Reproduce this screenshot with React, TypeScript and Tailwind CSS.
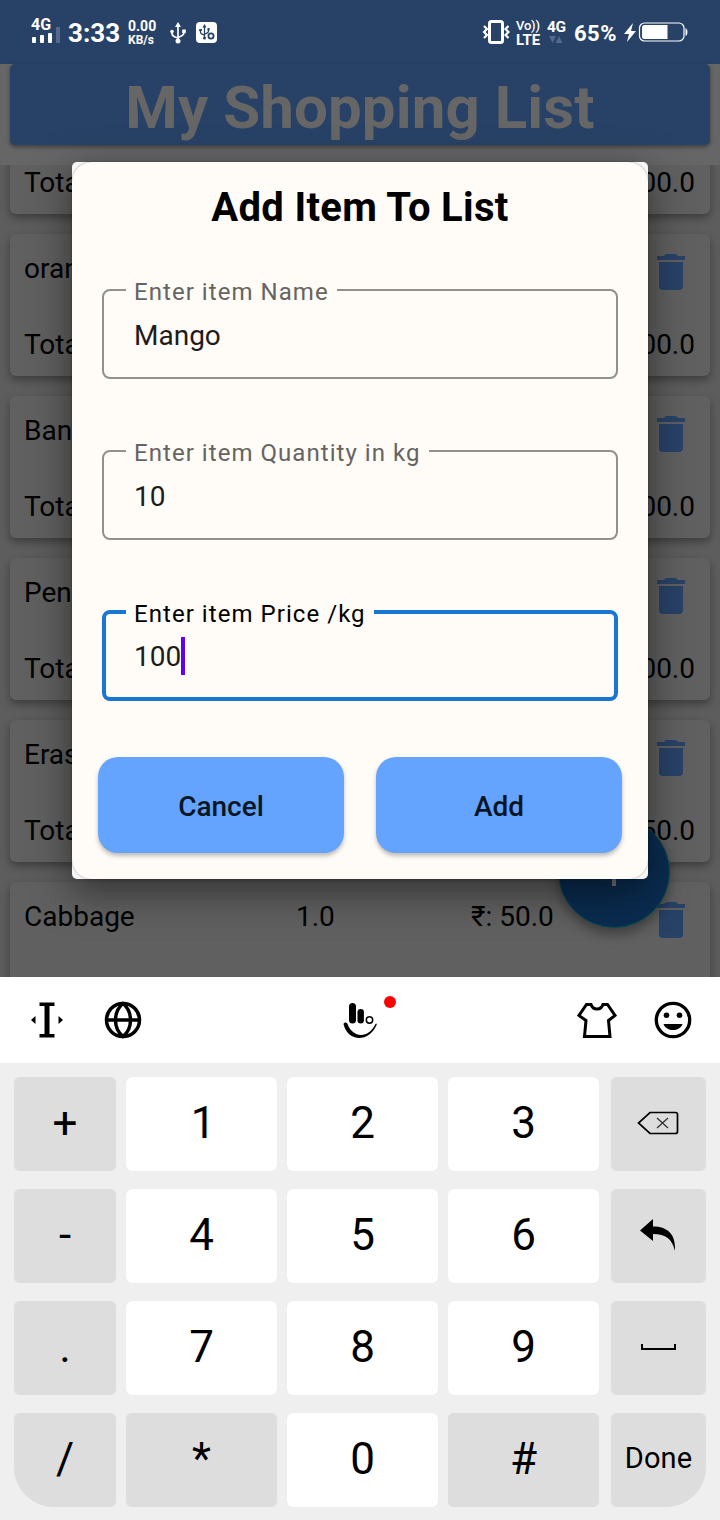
import React from 'react';

const items = [
  { name: 'Apple', qty: '10.0', price: '₹: 50.0', total: '₹: 500.0' },
  { name: 'orange', qty: '10.0', price: '₹: 50.0', total: '₹: 500.0' },
  { name: 'Banana', qty: '10.0', price: '₹: 50.0', total: '₹: 500.0' },
  { name: 'Pen', qty: '10.0', price: '₹: 10.0', total: '₹: 100.0' },
  { name: 'Eraser', qty: '10.0', price: '₹: 5.0', total: '₹: 50.0' },
  { name: 'Cabbage', qty: '1.0', price: '₹: 50.0', total: '₹: 50.0' },
];

function UsbIcon({ className }: { className: string }) {
  return (
    <svg className={className} viewBox="0 0 16 22" fill="none" stroke="currentColor" strokeWidth="1.7">
      <path d="M8 3v16M2 9v2.5q0 3 6 4.500M14 9v1.500q0 3-6 5" />
      <path d="M8 0l3 5H5z" fill="currentColor" stroke="none" />
      <circle cx="8" cy="19" r="2.500" fill="currentColor" stroke="none" />
      <circle cx="2" cy="9.500" r="1.800" fill="currentColor" stroke="none" />
      <path d="M12.200 7.500h3.600v3.500h-3.600z" fill="currentColor" stroke="none" />
    </svg>
  );
}

function StatusBar() {
  return (
    <header className="flex h-16 shrink-0 items-start bg-[#284267] pt-[18px] pl-[31px] font-bold text-white">
      <div className="flex w-[30px] flex-col">
        <span className="h-[14px] text-[16px] leading-[14px] tracking-[0.1px]">4G</span>
        <div className="-mt-[5px] ml-px flex h-[16px] items-end gap-1">
          <i className="h-[6px] w-1 shrink-0 rounded-[1px] bg-white" />
          <i className="h-[8px] w-1 shrink-0 rounded-[1px] bg-white" />
          <i className="h-[10px] w-1 shrink-0 rounded-[1px] bg-white" />
          <i className="h-[16px] w-1 shrink-0 bg-[#53688a]" />
        </div>
      </div>
      <span className="ml-[7px] w-[60px] text-[26px] leading-[31px]">3:33</span>
      <div className="flex w-[42px] flex-col pt-px text-[14px] leading-[15px]">
        <span>0.00</span>
        <span className="text-[12px] leading-[12px]">KB/s</span>
      </div>
      <UsbIcon className="mt-[4px] h-[22px] w-4" />
      <svg className="mt-[4px] ml-[10px] h-[21px] w-[21px]" viewBox="0 0 21 21">
        <rect width="21" height="21" rx="4" fill="#fff" />
        <g fill="none" stroke="#284267" strokeWidth="1.300">
          <path d="M8.500 4v13M4.500 8v2q0 2 4 3M12.500 7v2q0 2-4 3" />
          <circle cx="15" cy="14" r="2.600" strokeWidth="1.800" />
        </g>
        <path d="M8.500 2l2 3.500h-4zM3.200 7h2.600v2H3.200zM11.500 6h2v2.500h-2z" fill="#284267" />
        <circle cx="8.500" cy="16" r="1.500" fill="#284267" />
      </svg>
      <svg className="mt-[1px] ml-[265px] h-[26px] w-[28px]" viewBox="0 0 28 26" fill="none" stroke="#fff">
        <rect x="7.500" y="2.500" width="13" height="21" rx="2" strokeWidth="3" />
        <path d="M2 7l3 3-3 3 3 3-3 3M26.500 7l-3 3 3 3-3 3 3 3" strokeWidth="2.200" />
      </svg>
      <div className="ml-[6px] flex w-[31px] flex-col pt-px leading-[14px]">
        <span className="text-[13px] font-medium tracking-[-0.2px] whitespace-nowrap">Vo))</span>
        <span className="text-[15px] font-bold">LTE</span>
      </div>
      <div className="flex w-[27px] flex-col">
        <span className="h-[18px] text-[15.500px] leading-[19px] tracking-[-0.5px]">4G</span>
        <svg className="ml-px h-[8px] w-[16px]" viewBox="0 0 16 8">
          <path d="M1 0h7L4.500 7zM7.500 7h7L11 0z" fill="#53688a" />
        </svg>
      </div>
      <span className="w-[49px] text-[22px] leading-[32px] tracking-[0.5px]">65%</span>
      <svg className="mt-[3px] h-[22px] w-[66px]" viewBox="0 0 66 22">
        <path d="M10 2L1 13h5l-2 8 9-11H8z" fill="#fff" />
        <rect x="16.500" y="2" width="44.500" height="18" rx="5" fill="none" stroke="#fff" strokeWidth="1.200" />
        <path d="M21.500 4h23v14h-23q-2.500 0-2.500-2.500v-9Q19 4 21.500 4z" fill="#fff" />
        <path d="M62.500 7q2 1 2 4t-2 4z" fill="#fff" />
      </svg>
    </header>
  );
}

function ItemCard({ item }: { item: (typeof items)[number] }) {
  return (
    <article className="h-[142px] shrink-0 rounded-[6px] bg-[#606060] px-[14px] text-[28px] text-black shadow-[0_4px_8px_rgba(0,0,0,0.35)]">
      <div className="grid h-[70px] grid-cols-[272px_175px_1fr_32px] items-center">
        <span>{item.name}</span>
        <span>{item.qty}</span>
        <span>{item.price}</span>
        <svg className="mt-[6px] -ml-[7px] h-9 w-7" viewBox="0 0 28 36" fill="#284267">
          <path d="M0 2h7l2-2h10l2 2h7v4H0zM2 8h24v24q0 4-4 4H6q-4 0-4-4z" />
        </svg>
      </div>
      <div className="flex h-[82px] items-center justify-between">
        <span>Total</span>
        <span className="-mr-px pr-[2px]">{item.total}</span>
      </div>
    </article>
  );
}

function Field({ label, value, focused = false }: { label: string; value: string; focused?: boolean }) {
  return (
    <fieldset
      className={
        focused
          ? 'mb-[60px] h-[101px] rounded-[8px] border-4 border-[#1976d2] pl-[20px]'
          : 'mb-[60px] h-[101px] rounded-[8px] border-2 border-[#92908d] pl-[22px]'
      }
    >
      <legend
        className={
          focused
            ? 'h-6 px-2 text-[24px] leading-[28px] tracking-[1.05px] text-black'
            : 'h-6 px-2 text-[24px] leading-[28px] tracking-[1.05px] text-[#656462]'
        }
      >
        {label}
      </legend>
      <div
        className={
          focused
            ? 'flex items-center pt-[13px] pl-2 text-[28px] leading-[38px] text-[#1d1c1b]'
            : 'flex items-center pt-[16px] pl-2 text-[28px] leading-9 text-[#1d1c1b]'
        }
      >
        <span className={focused ? 'pt-[2px] leading-9' : ''}>{value}</span>
        {focused && <i className="h-[38px] w-1 bg-[#6200ee]" />}
      </div>
    </fieldset>
  );
}

function AddDialog() {
  return (
    <section className="absolute top-[162px] left-[72px] h-[717px] w-[576px] rounded-[5px] bg-[#f6f6f6] shadow-[0_12px_40px_rgba(0,0,0,0.5)]">
      <div className="flex h-full flex-col rounded-[20px] bg-[#fffbf6] px-[30px] shadow-[0_0_2px_rgba(0,0,0,0.4)]">
        <h2 className="h-[116px] pt-[22px] text-center text-[40px] leading-[47px] font-bold tracking-[0.3px] text-black">Add Item To List</h2>
        <Field label="Enter item Name" value="Mango" />
        <Field label="Enter item Quantity in kg" value="10" />
        <Field label="Enter item Price /kg" value="100" focused />
        <div className="-mx-1 -mt-[4px] grid grid-cols-2 gap-8 text-[28px] font-medium text-[#0b1624]">
          <button className="h-24 rounded-[20px] bg-[#64a4ff] pt-[3px] shadow-[0_3px_4px_rgba(0,0,0,0.25)]">Cancel</button>
          <button className="h-24 rounded-[20px] bg-[#64a4ff] pt-[3px] shadow-[0_3px_4px_rgba(0,0,0,0.25)]">Add</button>
        </div>
      </div>
    </section>
  );
}

function KeyboardToolbar() {
  return (
    <div className="flex h-[86px] items-center bg-white text-black">
      <svg className="ml-[30px] h-10 w-[34px]" viewBox="0 0 34 40">
        <path d="M9.500 2.500h15V6h-5v28h5v3.500h-15V34h5V6h-5zM5.500 16v8L1 20zM28.500 16v8l4.500-4z" />
      </svg>
      <svg className="ml-[40px] h-[38px] w-[38px]" viewBox="0 0 38 38" fill="none" stroke="#000" strokeWidth="3.500">
        <circle cx="19" cy="19" r="16.500" />
        <path d="M2 19h34M19 2.500c-10 8-10 25 0 33c10-8 10-25 0-33z" />
      </svg>
      <div className="relative ml-[200px] h-10 w-[56px]">
        <svg className="h-10 w-9" viewBox="0 0 36 40">
          <rect x="7" y="3" width="7" height="20.500" rx="3.500" />
          <rect x="15.500" y="9" width="6.400" height="14.500" rx="3.200" />
          <circle cx="27.500" cy="20" r="3.200" fill="none" stroke="#000" strokeWidth="1.500" />
          <path d="M1.500 24c1-2 3-2 4 0c5 14 21 15 28 0c.6-1.200 1.600-.2 1.100 1c-8 18-29 17-33.100-1z" />
        </svg>
        <i className="absolute -top-[4px] left-[42px] size-3 rounded-full bg-[#fe0000]" />
      </div>
      <svg className="ml-[178px] h-[38px] w-[42px]" viewBox="0 0 42 38" fill="none" stroke="#000" strokeWidth="3">
        <path d="M10.500 3.500H15c2 6 10 6 12 0h4.500l7.500 11-6.500 5L34 35.500H8.500L10 19.500l-7-5z" />
      </svg>
      <svg className="ml-[36px] h-[38px] w-[38px]" viewBox="0 0 38 38">
        <circle cx="19" cy="19" r="16.700" fill="none" stroke="#000" strokeWidth="3.300" />
        <circle cx="12.500" cy="14.300" r="2.800" />
        <circle cx="25.500" cy="14.300" r="2.800" />
        <path d="M9.500 23h19c-3 8-16 8-19 0z" />
      </svg>
    </div>
  );
}

function BackspaceIcon() {
  return (
    <svg className="mr-px h-6 w-[42px]" viewBox="0 0 42 24" fill="none" stroke="#000">
      <path d="M13 1.500h25.500q2 0 2 2v17q0 2-2 2H13L1.500 12z" strokeWidth="1.700" />
      <path d="M20 7l11 10M31 7L20 17" strokeWidth="1.300" stroke="#333" />
    </svg>
  );
}

function ReturnIcon() {
  return (
    <svg className="mr-px h-8 w-9" viewBox="0 0 36 32">
      <path d="M13 0v7.500c14 0 23 7 22 24.500c-3-12-9-17-22-17v7L0 11.500z" />
    </svg>
  );
}

function SpaceIcon() {
  return (
    <svg className="mr-px h-[6px] w-[35px]" viewBox="0 0 35 6" fill="none" stroke="#000" strokeWidth="2">
      <path d="M1 0v5h33V0" />
    </svg>
  );
}

type Key = { face: React.ReactNode; light?: boolean; small?: boolean; corner?: 'left' | 'right' };

const keys: Key[] = [
  { face: '+' }, { face: '1', light: true }, { face: '2', light: true }, { face: '3', light: true }, { face: <BackspaceIcon /> },
  { face: '-' }, { face: '4', light: true }, { face: '5', light: true }, { face: '6', light: true }, { face: <ReturnIcon /> },
  { face: '.' }, { face: '7', light: true }, { face: '8', light: true }, { face: '9', light: true }, { face: <SpaceIcon /> },
  { face: '/', corner: 'left' }, { face: '*' }, { face: '0', light: true }, { face: '#' }, { face: 'Done', small: true, corner: 'right' },
];

function Keyboard() {
  return (
    <section className="h-[543px] shrink-0 bg-[#efefef]">
      <KeyboardToolbar />
      <div className="grid grid-cols-[102px_151px_151px_151px_95px] grid-rows-[94px_94px_94px_94px] gap-x-[10px] gap-y-[18px] px-[14px] pt-[14px] text-black">
        {keys.map((k, i) => (
          <button
            key={i}
            className={[
              'flex items-center justify-center rounded-[6px] pb-[3px] shadow-[0_0_1px_rgba(0,0,0,0.06)]',
              i % 5 === 4 ? 'ml-[2px] w-[95px]' : '',
              k.face === '1' ? 'pl-[3px]' : '',
              k.light ? 'bg-white' : 'bg-[#dddddd]',
              k.small ? 'text-[29px] tracking-[0.1px]' : 'text-[44px]',
              k.corner === 'left' ? 'rounded-bl-[40px]' : '',
              k.corner === 'right' ? 'rounded-br-[40px]' : '',
            ].join(' ')}
          >
            {k.face}
          </button>
        ))}
      </div>
    </section>
  );
}

export default function App() {
  return (
    <main className="relative flex h-[1520px] w-[720px] flex-col overflow-hidden bg-[#666666] font-['Roboto','Noto_Sans',sans-serif]">
      <StatusBar />
      <div className="h-[101px] shrink-0 px-[10px]">
        <h1 className="h-[81px] rounded-[5px] bg-[#284267] pt-[9px] text-center text-[60px] leading-[70px] font-bold tracking-[0.1px] text-[#666666] shadow-[0_2px_4px_rgba(0,0,0,0.4)]">
          My Shopping List
        </h1>
      </div>
      <div className="relative h-[812px] shrink-0 overflow-hidden bg-[#5d5d5d] px-[10px]">
        <div className="-mt-[93px] flex flex-col gap-5">
          {items.map((item) => (
            <ItemCard key={item.name} item={item} />
          ))}
        </div>
        <button className="absolute top-[651px] left-[558px] flex size-[112px] items-center justify-center rounded-full border border-[#07504f] bg-[#0a2c50] shadow-[0_6px_12px_rgba(0,0,0,0.35)]">
          <svg className="h-7 w-7" viewBox="0 0 28 28" fill="#777">
            <path d="M12 0h4v12h12v4H16v12h-4V16H0v-4h12z" />
          </svg>
        </button>
      </div>
      <Keyboard />
      <AddDialog />
    </main>
  );
}
